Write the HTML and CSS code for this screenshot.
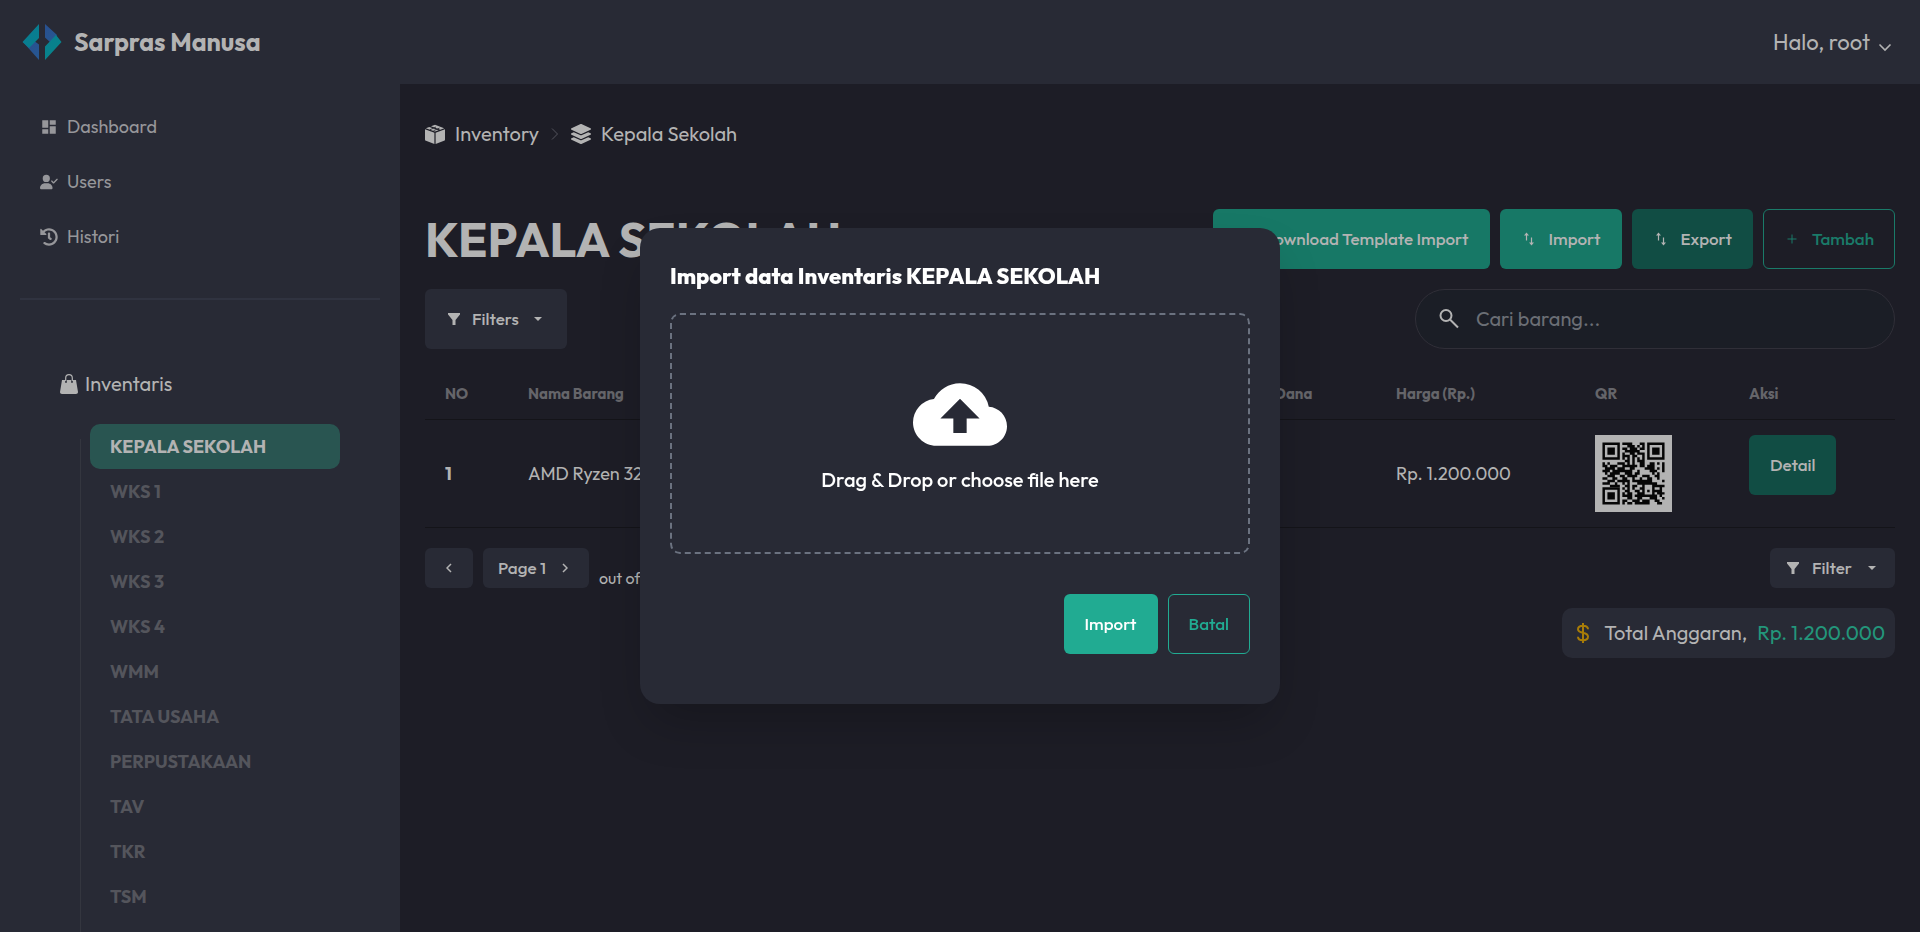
FILE: index.html
```html
<!DOCTYPE html>
<html lang="id">
<head>
<meta charset="utf-8">
<title>Sarpras Manusa</title>
<meta name="viewport" content="width=device-width, initial-scale=1">
<link rel="stylesheet" href="styles.css">
</head>
<body>
<div class="app">
  <header class="topbar">
    <a class="brand" href="#">
      <svg class="brand-logo" viewBox="0 0 40 36" aria-hidden="true">
        <defs>
          <linearGradient id="teal" x1="0" y1="0" x2="1" y2="1"><stop offset="0" stop-color="#087a92"/><stop offset="1" stop-color="#08858a"/></linearGradient>
          <linearGradient id="blue" x1="0" y1="0" x2="1" y2="1"><stop offset="0" stop-color="#2b4a8c"/><stop offset="1" stop-color="#245c94"/></linearGradient>
        </defs>
        <path fill="url(#blue)" d="M17 36V20.500l-5.500-4L1 18zM23 0v13.500l6 5.500 6-8z"/>
        <path fill="url(#teal)" d="M17 0v14L7 24l-6.500-6zM23 36V22.500L34 11l5.500 7z"/>
      </svg>
      <span>Sarpras Manusa</span>
    </a>
    <button class="user-menu" type="button">Halo, root
      <svg class="caret" viewBox="0 0 14 14" aria-hidden="true"><path d="M1.500 4.500 7 10l5.500-5.500"/></svg>
    </button>
  </header>

  <aside class="sidebar">
    <nav class="menu">
      <a href="#"><svg viewBox="0 0 24 24" aria-hidden="true"><path d="M3 13h8V3H3zm0 8h8v-6H3zm10 0h8V11h-8zm0-18v6h8V3z"/></svg>Dashboard</a>
      <a href="#"><svg viewBox="0 0 640 512" aria-hidden="true"><path d="M224 256A128 128 0 1 0 224 0a128 128 0 0 0 0 256zm-45.700 48C79.800 304 0 383.800 0 482.300 0 498.700 13.300 512 29.700 512h388.600c16.400 0 29.700-13.300 29.700-29.700C448 383.800 368.200 304 269.700 304zM625 177c9.400-9.400 9.400-24.600 0-33.900s-24.600-9.400-33.900 0l-111 111-47-47c-9.400-9.400-24.600-9.400-33.900 0s-9.400 24.600 0 33.900l64 64c9.400 9.400 24.600 9.400 33.900 0z"/></svg>Users</a>
      <a href="#"><svg viewBox="0 0 512 512" aria-hidden="true"><path d="M504 255.500c.300 136.600-111.200 248.400-247.800 248.500-59 0-113.200-20.500-155.800-54.900-11.100-8.900-11.900-25.500-1.800-35.600l11.300-11.300c8.600-8.600 22.400-9.600 31.900-2C173.100 425.100 212.800 440 256 440c101.700 0 184-82.300 184-184 0-101.700-82.300-184-184-184-48.800 0-93.100 19-126.100 49.900l50.800 50.800c10.100 10.100 2.900 27.300-11.300 27.300H24c-8.800 0-16-7.200-16-16V38.600c0-14.300 17.200-21.400 27.300-11.300l49.400 49.400C129.200 34.100 189.600 8 256 8c136.800 0 247.700 110.800 248 247.500zM323 326l-6 9c-8 9-22 12-32 4L224 293V152c0-13 11-24 24-24h16c13 0 24 11 24 24v109l41 32c10 8 12 22 4 33z"/></svg>Histori</a>
    </nav>
    <hr class="divider">
    <section class="inventory">
      <h2 class="inventory-title"><svg viewBox="0 0 18 20" aria-hidden="true"><path d="M2 6h3.200v2.300a.8.800 0 0 0 1.600 0V6h4.400v2.300a.8.800 0 0 0 1.600 0V6H16l2 12c0 1.200-.8 2-2 2H2c-1.200 0-2-.8-2-2z"/><path d="M5.700 7V4a3.300 3.300 0 0 1 6.600 0v3" fill="none" stroke="currentColor" stroke-width="1.200"/></svg>Inventaris</h2>
      <ul class="rooms">
        <li><a class="active" href="#">KEPALA SEKOLAH</a></li>
        <li><a href="#">WKS 1</a></li>
        <li><a href="#">WKS 2</a></li>
        <li><a href="#">WKS 3</a></li>
        <li><a href="#">WKS 4</a></li>
        <li><a href="#">WMM</a></li>
        <li><a href="#">TATA USAHA</a></li>
        <li><a href="#">PERPUSTAKAAN</a></li>
        <li><a href="#">TAV</a></li>
        <li><a href="#">TKR</a></li>
        <li><a href="#">TSM</a></li>
      </ul>
    </section>
  </aside>

  <main class="content">
    <nav class="crumbs" aria-label="Breadcrumb">
      <a href="#"><svg viewBox="0 0 20 20" aria-hidden="true"><path d="M0 5.300 9.400 8.700V20L1 16.800a1.500 1.500 0 0 1-1-1.400zM20 5.300v10.100c0 .6-.4 1.200-1 1.400L10.600 20V8.700zM.8 4.200 4.300 2.900l9.300 3.400-3.600 1.300zM6 2.300 9.400 1l.6-.2.600.2 8.600 3.200-3.900 1.500z"/><path d="M5 5.700l6-2.700M8.500 6.700l6-2.600" stroke="#1d1d26" stroke-width=".8"/></svg>Inventory</a>
      <svg class="crumb-sep" viewBox="0 0 8 12" aria-hidden="true"><path d="m1 .5 5.500 5.500L1 11.500"/></svg>
      <a href="#"><svg viewBox="0 0 512 512" aria-hidden="true"><path d="M12.400 148l232.900 105.700c6.800 3.100 14.500 3.100 21.300 0L499.600 148c16.500-7.500 16.500-32.500 0-40L266.600 2.300a25.600 25.600 0 0 0-21.300 0L12.400 108c-16.500 7.500-16.500 32.500 0 40zm487.200 88.300-58.100-26.300-161.600 73.300c-7.600 3.400-15.600 5.200-23.900 5.200s-16.300-1.700-23.900-5.200L70.500 210l-58.100 26.300c-16.500 7.500-16.500 32.500 0 40l232.900 105.600c6.800 3.100 14.500 3.100 21.300 0L499.600 276.300c16.500-7.500 16.500-32.500 0-40zm0 127.800-57.900-26.200-161.900 73.400c-7.600 3.400-15.600 5.200-23.900 5.200s-16.300-1.700-23.900-5.200L70.300 337.900 12.400 364.100c-16.500 7.500-16.500 32.500 0 40l232.900 105.600c6.800 3.100 14.500 3.100 21.300 0L499.600 404.100c16.500-7.500 16.500-32.500 0-40z"/></svg>Kepala Sekolah</a>
    </nav>

    <div class="row">
      <h1>KEPALA SEKOLAH</h1>
      <div class="actions">
        <button class="btn primary" type="button"><svg viewBox="0 0 16 16" aria-hidden="true"><path d="M7 2h2v6h3l-4 4-4-4h3zM3 13h10v1H3z"/></svg>Download Template Import</button>
        <button class="btn primary" type="button"><svg viewBox="0 0 16 16" aria-hidden="true"><path d="M5.500 1.500 8 4.500H6.100V9.500H4.900V4.500H3zM10.500 14.500 8 11.500h1.900V6.500h1.200v5H13z"/></svg>Import</button>
        <button class="btn dark" type="button"><svg viewBox="0 0 16 16" aria-hidden="true"><path d="M5.500 1.500 8 4.500H6.100V9.500H4.900V4.500H3zM10.500 14.500 8 11.500h1.900V6.500h1.200v5H13z"/></svg>Export</button>
        <button class="btn outline muted" type="button"><svg viewBox="0 0 16 16" aria-hidden="true"><path d="M7.500 3.500h1v4h4v1h-4v4h-1v-4h-4v-1h4z"/></svg>Tambah</button>
      </div>
    </div>

    <div class="row tools">
      <button class="btn filter" type="button"><svg viewBox="0 0 12 12" aria-hidden="true"><path d="M0 0h12v1.500L7.500 7v5h-3V7L0 1.500z"/></svg>Filters<svg class="tri" viewBox="0 0 8 4" aria-hidden="true"><path d="M0 0h8L4 4z"/></svg></button>
      <label class="search">
        <svg viewBox="0 0 20 20" aria-hidden="true"><circle cx="7" cy="6.500" r="5.500"/><path d="m11 10.500 8 8"/></svg>
        <input type="search" placeholder="Cari barang..." aria-label="Cari barang">
      </label>
    </div>

    <table class="items">
      <thead>
        <tr><th class="c-no">NO</th><th>Nama Barang</th><th class="c-fund">Sumber Dana</th><th class="c-price">Harga (Rp.)</th><th class="c-qr">QR</th><th class="c-act">Aksi</th></tr>
      </thead>
      <tbody>
        <tr>
          <td><b>1</b></td><td>AMD Ryzen 3200G</td><td></td><td>Rp. 1.200.000</td>
          <td>
            <svg class="qr" viewBox="-3 -3 31 31" role="img" aria-label="Kode QR">
              <path class="qr-paper" d="M-3-3h31v31H-3z"/>
              <path d="M0 0h7v7H0zM1 1v5h5V1zM2 2h3v3H2zM18 0h7v7h-7zM19 1v5h5V1zM20 2h3v3h-3zM0 18h7v7H0zM1 19v5h5v-5zM2 20h3v3H2z" fill-rule="evenodd"/>
              <path class="qr-bits" d="M8 .5h4M15 .5h2M10 1.500h3M14 1.500h1M16 1.500h1M8 2.500h2M11 2.500h3M15 2.500h2M9 3.500h6M8 4.500h1M11 4.500h2M14 4.500h3M8 5.500h3M12 5.500h2M16 5.500h1M8 6.500h1M10 6.500h1M12 6.500h1M14 6.500h1M16 6.500h1M9 7.500h2M12 7.500h1M14 7.500h3
              M0 8.500h1M2 8.500h1M6 8.500h3M10 8.500h1M12 8.500h1M15 8.500h2M19 8.500h2M22 8.500h1M24 8.500h1M0 9.500h2M3 9.500h3M8 9.500h6M15 9.500h2M18 9.500h3M24 9.500h1M1 10.500h4M6 10.500h3M11 10.500h2M17 10.500h4M22 10.500h1M24 10.500h1M0 11.500h3M4 11.500h8M14 11.500h1M19 11.500h3M24 11.500h1M1 12.500h1M3 12.500h4M9 12.500h3M13 12.500h2M20 12.500h1M22 12.500h1M2 13.500h3M7 13.500h2M10 13.500h4M16 13.500h3M21 13.500h2M0 14.500h2M4 14.500h2M8 14.500h2M12 14.500h1M15 14.500h1M18 14.500h2M22 14.500h1M2 15.500h3M6 15.500h5M12 15.500h8M24 15.500h1M0 16.500h3M5 16.500h1M8 16.500h1M10 16.500h1M14 16.500h8M3 17.500h4M9 17.500h2M12 17.500h2M16 17.500h1M20 17.500h5
              M8 18.500h1M10 18.500h1M12 18.500h1M15 18.500h2M20 18.500h1M23 18.500h1M9 19.500h2M13 19.500h2M16 19.500h1M18 19.500h1M20 19.500h4M8 20.500h1M10 20.500h2M14 20.500h3M20 20.500h1M22 20.500h3M8 21.500h4M13 21.500h9M23 21.500h1M10 22.500h2M14 22.500h2M19 22.500h3M24 22.500h1M8 23.500h2M12 23.500h3M16 23.500h3M21 23.500h2M8 24.500h1M10 24.500h2M13 24.500h6M22 24.500h2"/>
            </svg>
          </td>
          <td class="top"><button class="btn dark" type="button">Detail</button></td>
        </tr>
      </tbody>
    </table>

    <div class="row pager">
      <div class="pages">
        <button class="btn small prev" type="button" aria-label="Sebelumnya"><svg class="arrow" viewBox="0 0 6 10" aria-hidden="true"><path d="M5 1 1 5l4 4"/></svg></button>
        <button class="btn small next" type="button">Page 1<svg class="arrow" viewBox="0 0 6 10" aria-hidden="true"><path d="m1 1 4 4-4 4"/></svg></button>
        <span class="of">out of 1</span>
      </div>
      <button class="btn small total-filter" type="button"><svg viewBox="0 0 12 12" aria-hidden="true"><path d="M0 0h12v1.500L7.500 7v5h-3V7L0 1.500z"/></svg>Filter<svg class="tri" viewBox="0 0 8 4" aria-hidden="true"><path d="M0 0h8L4 4z"/></svg></button>
    </div>
    <p class="total"><svg viewBox="0 0 12 20" aria-hidden="true"><path d="M6 0v20M11 6.300C11 4 9 2.800 6 2.800S1 4 1 6.300C1 11 11 8.500 11 13.500c0 2.500-2 3.700-5 3.700s-5-1.200-5-3.500"/></svg><span>Total Anggaran,</span><span class="sum">Rp. 1.200.000</span></p>
  </main>
</div>

<div class="overlay">
  <form class="modal" role="dialog" aria-modal="true" aria-labelledby="modal-title">
    <h3 id="modal-title">Import data Inventaris KEPALA SEKOLAH</h3>
    <label class="drop">
      <input class="file" type="file">
      <svg viewBox="0 4 24 16" aria-hidden="true"><path d="M19.350 10.040A7.490 7.490 0 0 0 12 4C9.110 4 6.600 5.640 5.350 8.040A5.994 5.994 0 0 0 0 14c0 3.310 2.690 6 6 6h13c2.760 0 5-2.240 5-5 0-2.640-2.050-4.780-4.650-4.960zM13.700 13v3.700h-3.400V13H7l5-5 5 5z"/></svg>
      <span>Drag &amp; Drop or choose file here</span>
    </label>
    <div class="modal-actions">
      <button class="btn bright" type="button">Import</button>
      <button class="btn outline" type="button">Batal</button>
    </div>
  </form>
</div>
</body>
</html>
```
FILE: styles.css
```css
:root {
  --panel: #282a35;
  --page: #1d1d26;
  --text: #b3b3b3;
  --accent: #21ab92;
}

* { box-sizing: border-box; }

body {
  margin: 0;
  background: var(--page);
  color: var(--text);
  font-family: Outfit, Lato, "Open Sans", sans-serif;
  font-size: 18px;
  line-height: 24px;
}

a { color: inherit; text-decoration: none; }
svg { display: block; flex: none; fill: currentColor; }
h1, h2, h3, p, ul { margin: 0; padding: 0; }

.app {
  display: grid;
  grid-template: auto 1fr / 400px 1fr;
  height: 100vh;
  overflow: hidden;
}

.topbar {
  grid-column: 1 / -1;
  display: flex;
  align-items: center;
  justify-content: space-between;
  height: 84px;
  padding: 0 28px 0 22px;
  background: var(--panel);
}

.brand {
  display: flex;
  align-items: center;
  gap: 12px;
  font-size: 25px;
  font-weight: 700;
}
.brand-logo { width: 40px; height: 36px; }

.user-menu {
  display: flex;
  align-items: flex-end;
  gap: 8px;
  padding: 0;
  border: 0;
  background: none;
  color: inherit;
  font: inherit;
  font-size: 22px;
}
.caret { width: 14px; height: 14px; fill: none; stroke: currentColor; stroke-width: 1.6; }

.sidebar {
  padding: 15px 20px 0;
  background: var(--panel);
  overflow: hidden;
}
.menu a {
  display: flex;
  align-items: center;
  gap: 9px;
  height: 55px;
  padding: 0 20px;
  color: #96969a;
}
.menu svg { width: 18px; height: 18px; }

.divider {
  height: 2px;
  margin: 34px 0 0;
  border: 0;
  background: #303340;
}

.inventory { padding: 72px 40px 0; }
.inventory-title {
  display: flex;
  align-items: center;
  gap: 7px;
  font-size: 20px;
  font-weight: 400;
}
.inventory-title svg { width: 18px; height: 20px; }

.rooms {
  display: flow-root;
  position: relative;
  margin-left: 20px;
  padding: 28px 0 45px 10px;
  list-style: none;
}
.rooms::before {
  content: "";
  position: absolute;
  top: 43px;
  bottom: 0;
  left: 0;
  width: 1px;
  background: #34363f;
}
.rooms a {
  display: block;
  padding: 0 20px;
  border-radius: 10px;
  color: #54555c;
  font-weight: 700;
  line-height: 45px;
}
.rooms .active { background: #295551; color: var(--text); }

.content { padding: 35px 25px; overflow: hidden; }

.crumbs, .crumbs a { display: flex; align-items: center; }
.crumbs { gap: 12px; height: 30px; font-size: 20px; }
.crumbs a { gap: 10px; }
.crumbs a svg { width: 20px; height: 20px; }
.crumbs .crumb-sep { width: 8px; height: 12px; fill: none; stroke: #55555c; }

.row { display: flex; align-items: center; justify-content: space-between; }
.crumbs + .row { margin-top: 60px; }
h1 { font-size: 48px; font-weight: 700; line-height: 60px; white-space: nowrap; }
.actions, .pages { display: flex; gap: 10px; }

.btn {
  display: flex;
  align-items: center;
  justify-content: center;
  gap: 12px;
  height: 60px;
  padding: 0 20px;
  border: 1px solid transparent;
  border-radius: 6px;
  background: var(--panel);
  color: var(--text);
  font: inherit;
  font-size: 17px;
  font-weight: 500;
  white-space: nowrap;
}
.btn svg { width: 16px; height: 16px; }
.btn.primary { background: #177866; }
.btn.dark { background: #114d44; }
.btn.bright { background: var(--accent); color: #fff; }
.btn.outline { border-color: var(--accent); background: none; color: var(--accent); }
.btn.muted { border-color: #1a7b69; color: #1a7b69; }
.btn.small { height: 40px; padding: 0 15px; }
.btn.small svg, .btn.filter svg { width: 12px; height: 12px; }
.btn.small svg.tri, .btn.filter svg.tri { width: 8px; height: 4px; margin-left: 3px; }
.btn.small svg.arrow { width: 6px; height: 10px; fill: none; stroke: currentColor; stroke-width: 1.5; }

.tools { margin-top: 20px; }
.btn.filter { padding: 0 24px 0 22px; }

.search {
  display: flex;
  align-items: center;
  gap: 17px;
  width: 480px;
  height: 60px;
  padding: 0 23px;
  border: 1px solid #302f38;
  border-radius: 30px;
  background: #1b1e26;
}
.search svg { width: 20px; height: 20px; fill: none; stroke: currentColor; stroke-width: 2; }
.search input {
  flex: 1;
  min-width: 0;
  padding: 0;
  border: 0;
  outline: 0;
  background: none;
  color: inherit;
  font: inherit;
  font-size: 20px;
}
.search input::placeholder { color: #6b6e75; opacity: 1; }

.items {
  width: 100%;
  margin-top: 20px;
  border-collapse: collapse;
  table-layout: fixed;
  text-align: left;
}
.items th, .items td { padding: 15px 20px; border-bottom: 1px solid #141419; white-space: nowrap; }
.items th { color: #65656a; font-size: 15px; line-height: 20px; }
.items .top { vertical-align: top; }
.c-no { width: 83px; }
.c-fund { width: 178px; }
.c-price { width: 199px; }
.c-qr { width: 154px; }
.c-act { width: 166px; }
.qr { width: 77px; height: 77px; fill: #060606; }
.qr-paper { fill: var(--text); }
.qr-bits { stroke: #060606; }

.pager { margin-top: 20px; }
.btn.prev { width: 48px; }
.btn.next { gap: 16px; padding: 0 20px 0 14px; }
.of { align-self: flex-end; font-size: 16px; line-height: 20px; }
.btn.total-filter { padding: 0 18px 0 16px; gap: 13px; }

.total {
  display: flex;
  align-items: center;
  gap: 10px;
  width: fit-content;
  height: 50px;
  margin: 20px 0 0 auto;
  padding: 0 10px 0 15px;
  border-radius: 10px;
  background: var(--panel);
  font-size: 20px;
}
.total svg { width: 12px; height: 20px; margin-right: 5px; fill: none; stroke: #a87c08; stroke-width: 2; }
.sum { color: #23967b; }

.overlay {
  position: fixed;
  inset: 0;
  display: flex;
  align-items: center;
  justify-content: center;
}
.modal {
  width: 640px;
  max-width: 100%;
  padding: 30px 30px 50px;
  border-radius: 20px;
  background: var(--panel);
  box-shadow: 0 25px 50px -12px rgba(0, 0, 0, 0.25);
  color: #fff;
}
.modal h3 { font-size: 22px; font-weight: 800; line-height: 37px; }
.drop {
  display: flex;
  flex-direction: column;
  align-items: center;
  justify-content: center;
  gap: 22px;
  height: 241px;
  margin-top: 18px;
  padding-top: 7px;
  border: 2px dashed #6b7280;
  border-radius: 10px;
  font-size: 20px;
  font-weight: 500;
}
.drop svg { width: 94px; height: 63px; }
.file { position: absolute; width: 1px; height: 1px; opacity: 0; }
.modal-actions { display: flex; justify-content: flex-end; gap: 10px; margin-top: 40px; }
```
